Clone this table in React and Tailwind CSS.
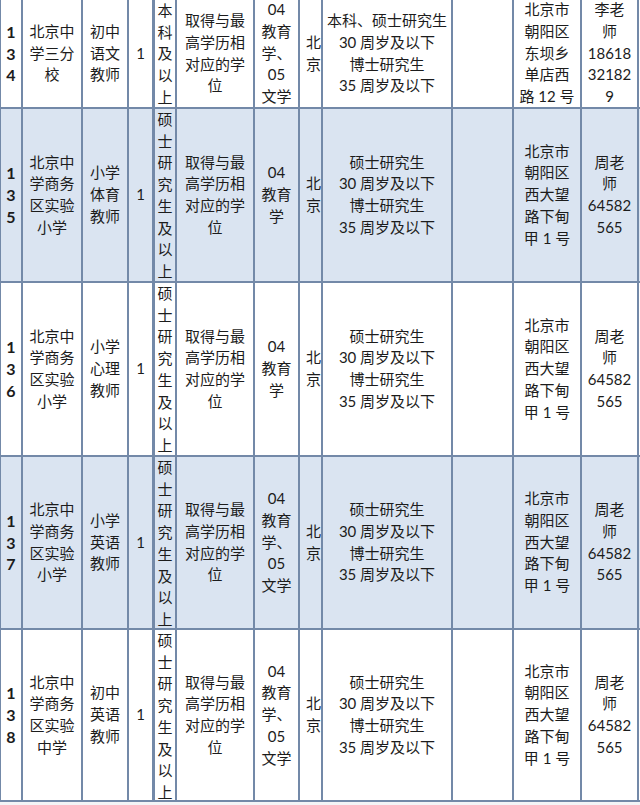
import React from 'react'

const COLS = 'grid grid-cols-[22px_60px_46px_25px_23px_78px_45px_23px_130px_61px_68px_57px]'

const rows = [
  {
    no: ['1', '3', '4'],
    h: 'h-[109px]',
    blue: false,
    school: ['北京中', '学三分', '校'],
    post: ['初中', '语文', '教师'],
    edu: ['本', '科', '及', '以', '上'],
    major: ['04', '教育', '学、', '05', '文学'],
    age: ['本科、硕士研究生', '30 周岁及以下', '博士研究生', '35 周岁及以下'],
    addr: ['北京市', '朝阳区', '东坝乡', '单店西', '路 12 号'],
    contact: ['李老', '师', '18618', '32182', '9'],
  },
  {
    no: ['1', '3', '5'],
    h: 'h-[174px]',
    blue: true,
    school: ['北京中', '学商务', '区实验', '小学'],
    post: ['小学', '体育', '教师'],
    edu: ['硕', '士', '研', '究', '生', '及', '以', '上'],
    major: ['04', '教育', '学'],
    age: ['硕士研究生', '30 周岁及以下', '博士研究生', '35 周岁及以下'],
    addr: ['北京市', '朝阳区', '西大望', '路下甸', '甲 1 号'],
    contact: ['周老', '师', '64582', '565'],
  },
  {
    no: ['1', '3', '6'],
    h: 'h-[174px]',
    blue: false,
    school: ['北京中', '学商务', '区实验', '小学'],
    post: ['小学', '心理', '教师'],
    edu: ['硕', '士', '研', '究', '生', '及', '以', '上'],
    major: ['04', '教育', '学'],
    age: ['硕士研究生', '30 周岁及以下', '博士研究生', '35 周岁及以下'],
    addr: ['北京市', '朝阳区', '西大望', '路下甸', '甲 1 号'],
    contact: ['周老', '师', '64582', '565'],
  },
  {
    no: ['1', '3', '7'],
    h: 'h-[173px]',
    blue: true,
    school: ['北京中', '学商务', '区实验', '小学'],
    post: ['小学', '英语', '教师'],
    edu: ['硕', '士', '研', '究', '生', '及', '以', '上'],
    major: ['04', '教育', '学、', '05', '文学'],
    age: ['硕士研究生', '30 周岁及以下', '博士研究生', '35 周岁及以下'],
    addr: ['北京市', '朝阳区', '西大望', '路下甸', '甲 1 号'],
    contact: ['周老', '师', '64582', '565'],
  },
  {
    no: ['1', '3', '8'],
    h: 'h-[172px]',
    blue: false,
    school: ['北京中', '学商务', '区实验', '中学'],
    post: ['初中', '英语', '教师'],
    edu: ['硕', '士', '研', '究', '生', '及', '以', '上'],
    major: ['04', '教育', '学、', '05', '文学'],
    age: ['硕士研究生', '30 周岁及以下', '博士研究生', '35 周岁及以下'],
    addr: ['北京市', '朝阳区', '西大望', '路下甸', '甲 1 号'],
    contact: ['周老', '师', '64582', '565'],
  },
]

function Cell({ lines = [], className = '' }) {
  return (
    <div className={`flex flex-col items-center justify-center text-center border-r-2 border-[#7389a8] overflow-hidden ${className}`}>
      {lines.map((l, i) => (
        <span key={i} className="whitespace-nowrap">{l}</span>
      ))}
    </div>
  )
}

export default function App() {
  return (
    <div className="w-[640px] h-[805px] bg-[#f4f5f7] overflow-hidden text-[15px] leading-[21.7px] text-[#1c1c1c] font-['Lato','Noto_Sans_CJK_SC',sans-serif]">
      <div className="w-[640px] border-l border-[#7389a8]">
        {rows.map((r, idx) => (
          <div
            key={idx}
            className={`${COLS} ${r.h} border-b-2 border-[#7389a8] ${r.blue ? 'bg-[#dae4f1]' : 'bg-white'}`}
          >
            <Cell lines={r.no} className="font-bold text-[16px]" />
            <Cell lines={r.school} />
            <Cell lines={r.post} />
            <Cell lines={['1']} />
            <Cell lines={r.edu} className="justify-start border-l border-[#7389a8]" />
            <Cell lines={r.major.length ? ['取得与最', '高学历相', '对应的学', '位'] : []} />
            <Cell lines={r.major} />
            <div className="flex flex-col justify-center border-r-2 border-[#7389a8] overflow-hidden pl-[6px]">
              <span className="whitespace-nowrap">北</span>
              <span className="whitespace-nowrap">京</span>
            </div>
            <Cell lines={r.age} />
            <Cell lines={[]} />
            <Cell lines={r.addr} />
            <Cell lines={r.contact} />
          </div>
        ))}
      </div>
    </div>
  )
}
